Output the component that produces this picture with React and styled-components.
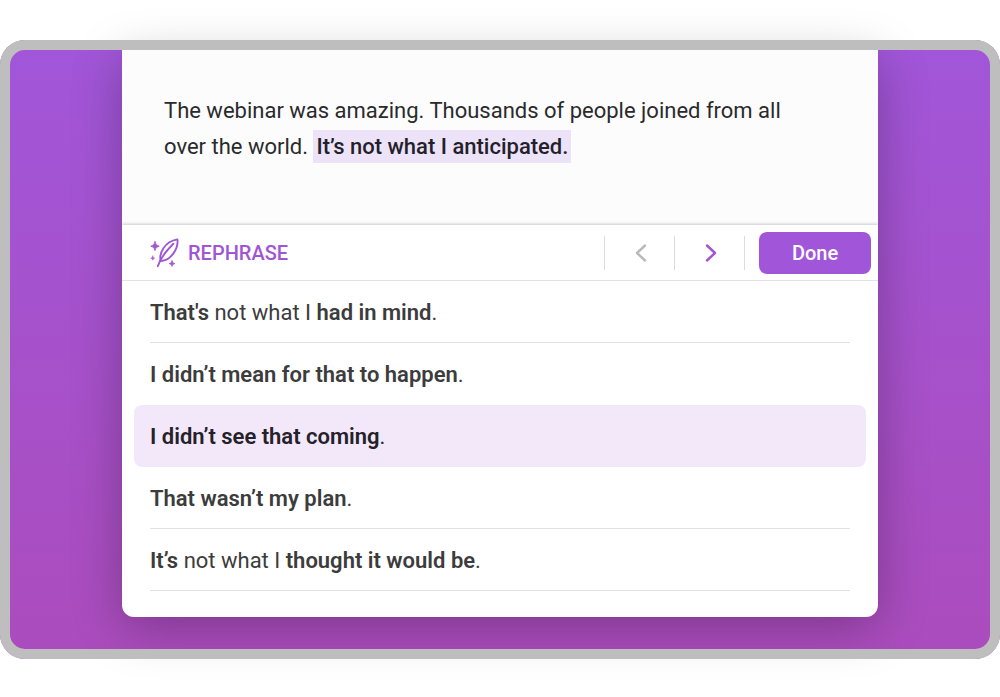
import { useState } from 'react'
import styled, { createGlobalStyle } from 'styled-components'

const GlobalStyle = createGlobalStyle`
	* { box-sizing: border-box; }
	body {
		margin: 0;
		background: #fff;
		font-family: Roboto, Arial, sans-serif;
	}
`

const Page = styled.main`
	padding: 40px 0 38px;
	overflow: hidden;
`

/* the rim sits above the card shadow, so it is a separate layer */
const Frame = styled.div`
	position: relative;
	padding: 10px 10px 42px;
	border-radius: 25px;
	background: linear-gradient(#a156d9, #ab4cbd);
	&::after {
		content: '';
		position: absolute;
		inset: 0;
		border: 10px solid #bebebe;
		border-radius: 25px;
		pointer-events: none;
	}
`

const Card = styled.section`
	margin: 0 112px;
	border-radius: 0 0 12px 12px;
	background: #fff;
	box-shadow: 0 10px 50px rgba(0, 0, 0, 0.28);
`

const Document = styled.p`
	margin: 0;
	padding: 43px 64px 60px 42px;
	background: #fcfcfc;
	color: #2a2a2d;
	font-size: 22px;
	line-height: 36px;
`

const Highlight = styled.mark`
	padding: 4px 3px;
	background: #ece3f8;
	color: #241f2b;
	font-weight: 500;
`

const Toolbar = styled.header`
	position: relative;
	display: flex;
	align-items: center;
	height: 56px;
	padding: 1px 7px 0 28px;
	border-bottom: 1px solid #e2e2e2;
	background: #fff;
	box-shadow: 0 -1px 3px rgba(0, 0, 0, 0.2);
	clip-path: inset(-6px 0 0 0);
`

const Title = styled.h1`
	flex: 1;
	margin: 0 0 0 9px;
	color: #a056d4;
	font-size: 20px;
	font-weight: 500;
`

const Arrow = styled.button`
	display: grid;
	place-items: center;
	width: 70px;
	height: 34px;
	padding: 0 0 0 2px;
	border: 0;
	border-left: 1px solid #dcdcdc;
	background: none;
	color: ${props => (props.disabled ? '#b9b9b9' : '#a056d4')};
`

const DoneCell = styled.div`
	display: flex;
	align-items: center;
	height: 34px;
	padding-left: 14px;
	border-left: 1px solid #dcdcdc;
`

const Done = styled.button`
	width: 112px;
	height: 42px;
	border: 0;
	border-radius: 8px;
	background: #a156d9;
	color: #fff;
	font: 500 20px Roboto, Arial, sans-serif;
`

const List = styled.ul`
	margin: 0;
	padding: 0 12px 26px;
	list-style: none;
`

const Option = styled.button`
	display: block;
	width: 100%;
	padding: 0 16px;
	border: 0;
	border-radius: 8px;
	background: ${props => (props.$active ? '#f2e8fa' : 'transparent')};
	color: ${props => (props.$active ? '#242128' : '#3c3c3c')};
	font: 400 22px Roboto, Arial, sans-serif;
	text-align: left;
	cursor: pointer;
`

const OptionText = styled.span`
	display: block;
	height: 62px;
	border-bottom: 1px solid ${props => (props.$line ? '#e2e2e2' : 'transparent')};
	line-height: 64px;
	b { font-weight: 600; }
`

const Feather = () => (
	<svg width='29' height='30' viewBox='0 0 29 30' fill='none' stroke='#a056d4' strokeWidth='1.9' strokeLinecap='round' strokeLinejoin='round' aria-hidden='true'>
		<path d='M7.8 28.2C9.5 22.5 14.5 14.5 23.4 5.8' />
		<path d='M10.8 23C8.6 15.5 14.5 3.6 27.4 1.4C28.6 9.6 21.6 22.6 10.8 23Z' />
		<path d='M5 3.8Q5.4 7.8 9.2 8.2Q5.4 8.6 5 12.6Q4.6 8.6 .8 8.2Q4.6 7.8 5 3.8Z' fill='#a056d4' strokeWidth='.9' />
		<path d='M2.8 18Q3 20 4.8 20.2Q3 20.4 2.8 22.2Q2.6 20.4 .8 20.2Q2.6 20 2.8 18Z' fill='#a056d4' strokeWidth='.5' />
		<path d='M22 22.6Q22.3 25.3 25 25.6Q22.3 25.9 22 28.6Q21.7 25.9 19 25.6Q21.7 25.3 22 22.6Z' fill='#a056d4' strokeWidth='.6' />
	</svg>
)

const Chevron = ({ d }) => (
	<svg width='12' height='18' viewBox='0 0 12 18' fill='none' stroke='currentColor' strokeWidth='2.4' strokeLinecap='round' strokeLinejoin='round' aria-hidden='true'>
		<path d={d} />
	</svg>
)

const options = [
	<><b>That's</b> not what I <b>had in mind</b>.</>,
	<><b>I didn’t mean for that to happen</b>.</>,
	<><b>I didn’t see that coming</b>.</>,
	<><b>That wasn’t my plan</b>.</>,
	<><b>It’s</b> not what I <b>thought it would be</b>.</>
]

const App = () => {
	const [active, setActive] = useState(2)

	return (
		<Page>
			<GlobalStyle />
			<Frame>
				<Card>
					<Document>
						The webinar was amazing. Thousands of people joined from all over the world. <Highlight>It’s not what I anticipated.</Highlight>
					</Document>
					<Toolbar>
						<Feather />
						<Title>REPHRASE</Title>
						<Arrow disabled aria-label='Previous'><Chevron d='M10 1.5L2 9L10 16.5' /></Arrow>
						<Arrow aria-label='Next'><Chevron d='M2 1.5L10 9L2 16.5' /></Arrow>
						<DoneCell>
							<Done>Done</Done>
						</DoneCell>
					</Toolbar>
					<List>
						{options.map((text, i) => (
							<li key={i}>
								<Option $active={i === active} aria-pressed={i === active} onClick={() => setActive(i)}>
									<OptionText $line={i !== active && i + 1 !== active}>{text}</OptionText>
								</Option>
							</li>
						))}
					</List>
				</Card>
			</Frame>
		</Page>
	)
}

export default App
